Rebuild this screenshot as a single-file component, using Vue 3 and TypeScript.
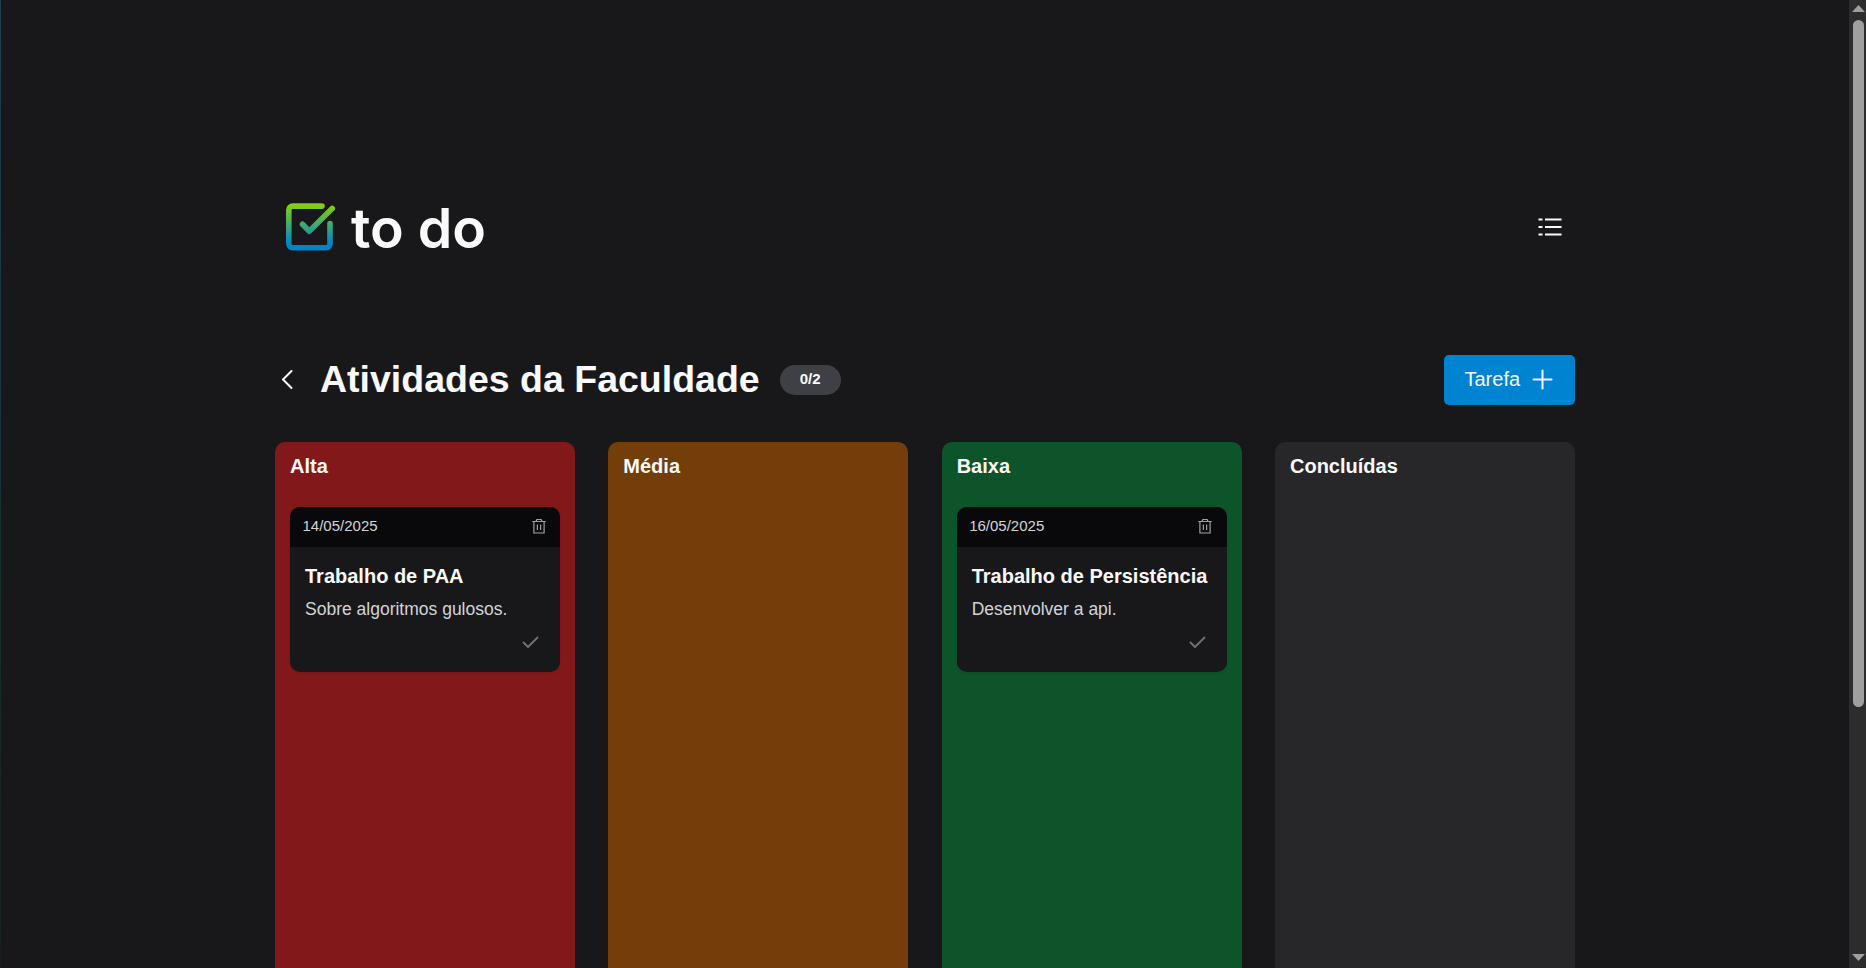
<script setup lang="ts">
interface Task {
  date: string
  title: string
  description: string
}

interface Column {
  name: string
  tone: string
  tasks: Task[]
}

const columns: Column[] = [
  {
    name: 'Alta',
    tone: 'high',
    tasks: [{ date: '14/05/2025', title: 'Trabalho de PAA', description: 'Sobre algoritmos gulosos.' }],
  },
  { name: 'Média', tone: 'medium', tasks: [] },
  {
    name: 'Baixa',
    tone: 'low',
    tasks: [{ date: '16/05/2025', title: 'Trabalho de Persistência', description: 'Desenvolver a api.' }],
  },
  { name: 'Concluídas', tone: 'done', tasks: [] },
]
</script>

<template>
  <div class="screen">
    <div class="edge"></div>
    <main class="page">
      <div class="container">
        <header class="top">
          <div class="brand">
            <svg class="mark" width="52" height="52" viewBox="0 0 52 52" fill="none">
              <defs>
                <linearGradient id="brand-fill" gradientUnits="userSpaceOnUse" x1="0" y1="3" x2="0" y2="49">
                  <stop offset="0.06" stop-color="#84cc16" />
                  <stop offset="0.88" stop-color="#0284c7" />
                </linearGradient>
              </defs>
              <g stroke="url(#brand-fill)" stroke-width="5.6" stroke-linecap="round" stroke-linejoin="round">
                <path d="M38 6.100H8.8a4 4 0 0 0-4 4V43.800a4 4 0 0 0 4 4H42a4 4 0 0 0 4-4V23.500" />
                <path d="M18.500 24.200L25.300 31.200L48.200 8.500" />
              </g>
            </svg>
            <span class="wordmark">to do</span>
          </div>
          <button class="list-button" aria-label="Listas">
            <svg width="24" height="18" viewBox="0 0 24 18" stroke="#fafafa" stroke-width="2">
              <path d="M0.500 1.500H4.500M7 1.500H23.500M0.500 9H4.500M7 9H23.500M0.500 16.500H4.500M7 16.500H23.500" />
            </svg>
          </button>
        </header>

        <section class="heading">
          <svg class="back" width="12" height="20" viewBox="0 0 12 20" fill="none" stroke="#fafafa" stroke-width="2" stroke-linecap="round" stroke-linejoin="round">
            <path d="M10.500 2L2 10.500L10.500 19" />
          </svg>
          <h1>Atividades da Faculdade</h1>
          <span class="badge">0/2</span>
          <button class="add">
            <span>Tarefa</span>
            <svg width="21" height="21" viewBox="0 0 21 21" stroke="#fafafa" stroke-width="2" stroke-linecap="round">
              <path d="M10.500 1.500V19.500M1.500 10.500H19.500" />
            </svg>
          </button>
        </section>

        <section class="board">
          <div v-for="column in columns" :key="column.name" class="column" :class="column.tone">
            <h2>{{ column.name }}</h2>
            <article v-for="task in column.tasks" :key="task.title" class="card">
              <div class="card-head">
                <span>{{ task.date }}</span>
                <svg width="14" height="16" viewBox="0 0 14 16" fill="none" stroke="#9f9fa9" stroke-width="1.200">
                  <path d="M0.300 3.500H13.700M4 3.500L4.800 1.500H9.200L10 3.500M1.900 3.500V15H12.100V3.500M5.400 6.500V12M8.600 6.500V12" />
                </svg>
              </div>
              <div class="card-body">
                <h3>{{ task.title }}</h3>
                <p>{{ task.description }}</p>
                <svg class="check" width="17" height="13" viewBox="0 0 17 13" fill="none" stroke="#71717b" stroke-width="1.800" stroke-linecap="round" stroke-linejoin="round">
                  <path d="M1.500 6.500L6 11L15.500 1.500" />
                </svg>
              </div>
            </article>
          </div>
        </section>
      </div>
    </main>
    <div class="scrollbar">
      <svg width="13" height="7" viewBox="0 0 13 7"><path d="M0 7L6.500 0L13 7Z" fill="#9f9f9f" /></svg>
      <div class="thumb"></div>
      <svg class="down" width="13" height="7" viewBox="0 0 13 7"><path d="M0 0L6.500 7L13 0Z" fill="#9f9f9f" /></svg>
    </div>
  </div>
</template>

<style>
body {
  margin: 0;
  overflow: hidden;
  background: #18181b;
}
</style>

<style scoped>
.screen {
  display: flex;
  width: 1866px;
  height: 968px;
  overflow: hidden;
  background: #18181b;
  color: #fafafa;
  font-family: "Liberation Sans", Arial, sans-serif;
}
.edge {
  width: 1px;
  background: linear-gradient(#1d3f50, #14302f 60%, #18201f);
}
.page {
  flex: 1;
  padding: 200px 274px 0;
  box-sizing: border-box;
}
.container { width: 1300px; }
h1, h2, h3, p { margin: 0; }
button {
  border: 0;
  padding: 0;
  background: none;
  color: inherit;
  font: inherit;
}
.top {
  height: 54px;
  display: flex;
  align-items: center;
  justify-content: space-between;
}
.brand {
  display: flex;
  align-items: center;
  padding-left: 9px;
}
.mark { margin-bottom: 2px; }
.wordmark {
  margin-left: 15px;
  padding-top: 2px;
  font-family: Inter, sans-serif;
  font-size: 55.4px;
  line-height: 54px;
  font-weight: 600;
}
.list-button {
  display: flex;
  margin-right: 13px;
}
.heading {
  margin-top: 101px;
  height: 50px;
  display: flex;
  align-items: center;
}
.back { margin: 0 0 2px 6px; }
h1 {
  margin-left: 27px;
  padding-bottom: 2px;
  font-size: 37.5px;
  line-height: 46px;
}
.badge {
  margin-left: 20px;
  width: 61px;
  height: 30px;
  line-height: 28px;
  border-radius: 15px;
  background: #3f3f46;
  font-size: 15px;
  font-weight: 700;
  text-align: center;
}
.add {
  margin-left: auto;
  width: 131px;
  height: 50px;
  padding: 0 22px 1px 20.500px;
  box-sizing: border-box;
  display: flex;
  align-items: center;
  justify-content: space-between;
  border-radius: 5px;
  background: #0084d1;
  font-size: 20px;
}
.add span {
  padding-bottom: 1px;
}
.board {
  margin-top: 37px;
  display: flex;
  justify-content: space-between;
}
.column {
  width: 300px;
  height: 620px;
  padding: 10px 15px;
  box-sizing: border-box;
  border-radius: 10px;
}
.high { background: #82181a; }
.medium { background: #733e0a; }
.low { background: #0d542b; }
.done { background: #27272a; }
h2 {
  font-size: 20px;
  line-height: 28px;
}
.card {
  margin-top: 27px;
  height: 165px;
  border-radius: 10px;
  overflow: hidden;
  background: #18181b;
  box-shadow: 0 1px 3px rgba(0, 0, 0, 0.1);
}
.card-head {
  height: 40px;
  padding: 0 14.500px 2px 12.500px;
  box-sizing: border-box;
  display: flex;
  align-items: center;
  justify-content: space-between;
  background: #09090b;
  color: #d4d4d8;
  font-size: 15px;
  line-height: 38px;
}
.card-body {
  display: flex;
  flex-direction: column;
  padding: 15px 15px 0;
}
h3 {
  font-size: 20px;
  line-height: 28px;
  white-space: nowrap;
}
p {
  margin-top: 6px;
  color: #d4d4d8;
  font-size: 17.5px;
  line-height: 26px;
}
.check {
  align-self: flex-end;
  margin: 14px 6px 0 0;
}
.scrollbar {
  width: 17px;
  box-sizing: border-box;
  padding: 5px 1px 7px 3px;
  display: flex;
  flex-direction: column;
  align-items: center;
  background: #2c2c2c;
}
.thumb {
  width: 11px;
  height: 687px;
  margin-top: 8px;
  border-radius: 6px;
  background: #9f9f9f;
}
.down { margin-top: auto; }
</style>
